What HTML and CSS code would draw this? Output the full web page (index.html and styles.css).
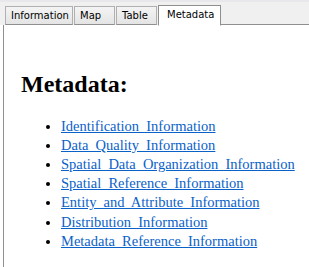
FILE: index.html
```html
<!DOCTYPE html>
<html>
<head>
<meta charset="utf-8">
<link rel="stylesheet" href="styles.css">
</head>
<body>
<div class="tabs">
  <div class="tab tab-info">Information</div>
  <div class="tab">Map</div>
  <div class="tab">Table</div>
  <div class="tab tab-active">Metadata</div>
  <div class="tab-rest"></div>
</div>
<div class="panel">
  <h2 class="title">Metadata:</h2>
  <ul class="links">
    <li><a href="#">Identification Information</a></li>
    <li><a href="#">Data Quality Information</a></li>
    <li><a href="#">Spatial Data Organization Information</a></li>
    <li><a href="#">Spatial Reference Information</a></li>
    <li><a href="#">Entity and Attribute Information</a></li>
    <li><a href="#">Distribution Information</a></li>
    <li><a href="#">Metadata Reference Information</a></li>
  </ul>
</div>
</body>
</html>
```

FILE: styles.css
```css
html, body {
  margin: 0;
  padding: 0;
  background: #ffffff;
}
body {
  width: 309px;
  height: 267px;
  overflow: hidden;
}
.tabs {
  display: flex;
  align-items: flex-end;
  height: 25px;
  box-sizing: border-box;
  padding-left: 5px;
  background: #f0f0f0;
  border-top: 2px solid #e8e8ec;
}
.tab {
  box-sizing: border-box;
  height: 19px;
  min-width: 41px;
  padding: 3px 5px 0 5px;
  margin-right: 1px;
  font-family: "DejaVu Sans", sans-serif;
  font-size: 10px;
  color: #000;
  background: linear-gradient(#f4f4f4, #e4e4e4);
  border: 1px solid #b0b0b0;
  border-bottom: 1px solid #8e8f8f;
}
.tab-info {
  width: 68px;
}
.tab-active {
  height: 21px;
  width: 63px;
  padding: 3px 8px 0 8px;
  margin-right: 0;
  background: #ffffff;
  border: 1px solid #8e8f8f;
  border-bottom: 1px solid #ffffff;
  position: relative;
  top: 1px;
}
.tab-rest {
  flex: 1;
  align-self: stretch;
  border-bottom: 1px solid #8e8f8f;
}
.panel {
  margin-left: 3px;
  border-left: 1px solid #8e8f8f;
  height: 242px;
  padding: 26px 0 0 17px;
  box-sizing: border-box;
  font-family: "Liberation Serif", serif;
}
.title {
  margin: 20px 0 18px 0;
  font-size: 24px;
  font-weight: bold;
  line-height: 27.6px;
  color: #000;
}
.links {
  margin: 0;
  padding-left: 40px;
  font-size: 14.5px;
  line-height: 19.2px;
  white-space: nowrap;
}
.links a {
  color: #0a62c9;
  text-decoration: underline;
  word-spacing: 3.5px;
}
```
